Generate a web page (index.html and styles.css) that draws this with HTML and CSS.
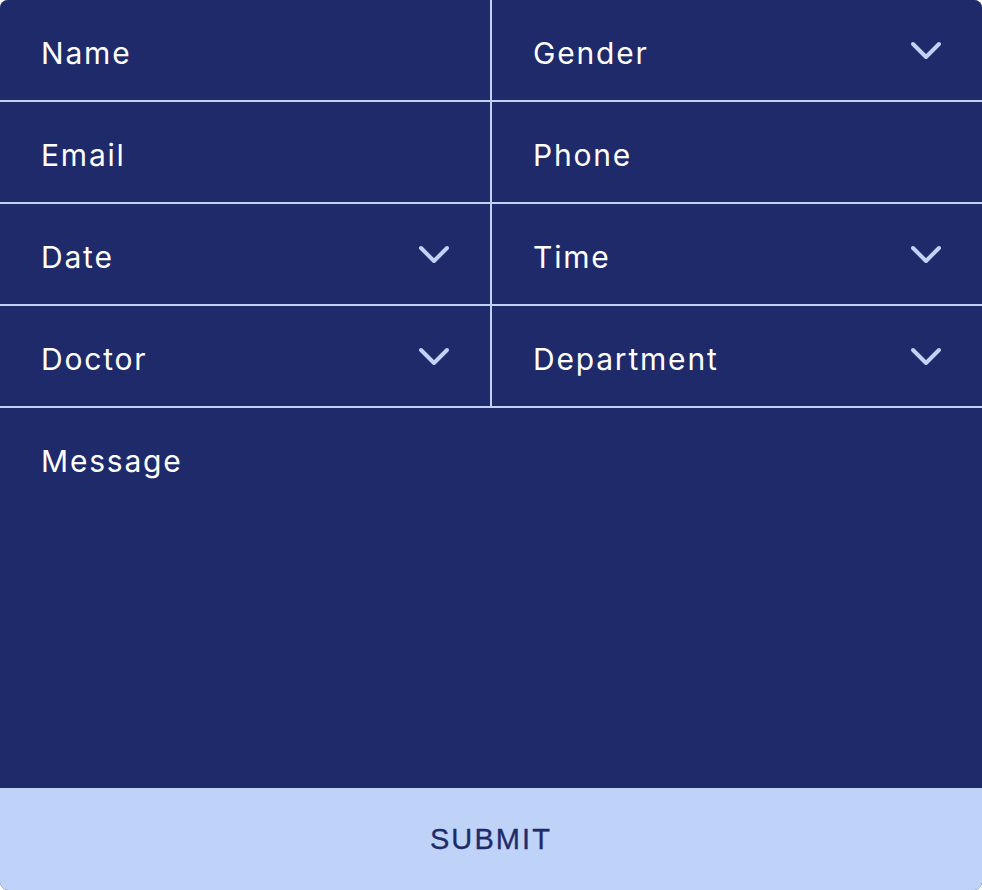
FILE: index.html
```html
<!DOCTYPE html>
<html>
<head>
<meta charset="utf-8">
<link rel="stylesheet" href="styles.css">
</head>
<body>
<form class="form">
  <div class="grid">
    <div class="field"><span class="label">Name</span></div>
    <div class="field"><span class="label">Gender</span><svg class="chev" viewBox="0 0 32 19"><path d="M3 3 L16 16 L29 3"/></svg></div>
    <div class="field"><span class="label">Email</span></div>
    <div class="field"><span class="label">Phone</span></div>
    <div class="field"><span class="label">Date</span><svg class="chev" viewBox="0 0 32 19"><path d="M3 3 L16 16 L29 3"/></svg></div>
    <div class="field"><span class="label">Time</span><svg class="chev" viewBox="0 0 32 19"><path d="M3 3 L16 16 L29 3"/></svg></div>
    <div class="field"><span class="label">Doctor</span><svg class="chev" viewBox="0 0 32 19"><path d="M3 3 L16 16 L29 3"/></svg></div>
    <div class="field"><span class="label">Department</span><svg class="chev" viewBox="0 0 32 19"><path d="M3 3 L16 16 L29 3"/></svg></div>
  </div>
  <div class="message"><span class="label">Message</span></div>
  <div class="submit">SUBMIT</div>
</form>
</body>
</html>
```

FILE: styles.css
```css
html, body {
  margin: 0;
  padding: 0;
  background: #ffffff;
}
.form {
  width: 982px;
  height: 890px;
  background: #1f2a6b;
  border-radius: 8px;
  overflow: hidden;
  display: flex;
  flex-direction: column;
  font-family: "Inter", "Liberation Sans", sans-serif;
}
.grid {
  display: grid;
  grid-template-columns: 490px 490px;
  column-gap: 2px;
  row-gap: 2px;
  background: #bfd2f8;
  border-bottom: 2px solid #bfd2f8;
}
.field {
  height: 100px;
  background: #1f2a6b;
  display: flex;
  align-items: center;
  justify-content: space-between;
  padding: 0 40px 0 41px;
  box-sizing: border-box;
}
.label {
  color: #ffffff;
  font-size: 30px;
  letter-spacing: 1.8px;
  font-weight: 400;
  margin-top: 5px;
}
.chev {
  width: 32px;
  height: 19px;
  margin-top: 1px;
  fill: none;
  stroke: #bfd2f8;
  stroke-width: 4;
  stroke-linecap: round;
  stroke-linejoin: round;
}
.message {
  flex: 1;
  padding: 35px 41px 0;
  box-sizing: border-box;
}
.message .label {
  margin-top: 0;
  display: block;
}
.submit {
  height: 102px;
  background: #bfd2f8;
  color: #1f2a6b;
  display: flex;
  align-items: center;
  justify-content: center;
  font-size: 29px;
  letter-spacing: 2.1px;
  font-family: "Liberation Sans", "Inter", sans-serif;
  -webkit-text-stroke: 0.3px #1f2a6b;
}
```
